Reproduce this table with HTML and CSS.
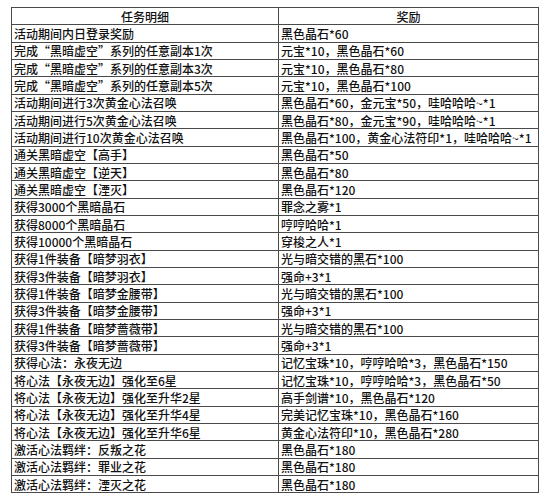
FILE: index.html
```html
<!DOCTYPE html>
<html lang="zh-CN">
<head>
<meta charset="utf-8">
<link rel="stylesheet" href="styles.css">
</head>
<body>
<div class="page">
<table class="tasks">
<colgroup><col class="c1"><col class="c2"></colgroup>
<thead>
<tr><th>任务明细</th><th>奖励</th></tr>
</thead>
<tbody>
<tr><td>活动期间内日登录奖励</td><td>黑色晶石*60</td></tr>
<tr><td>完成“黑暗虚空”系列的任意副本1次</td><td>元宝*10，黑色晶石*60</td></tr>
<tr><td>完成“黑暗虚空”系列的任意副本3次</td><td>元宝*10，黑色晶石*80</td></tr>
<tr><td>完成“黑暗虚空”系列的任意副本5次</td><td>元宝*10，黑色晶石*100</td></tr>
<tr><td>活动期间进行3次黄金心法召唤</td><td>黑色晶石*60，金元宝*50，哇哈哈哈~*1</td></tr>
<tr><td>活动期间进行5次黄金心法召唤</td><td>黑色晶石*80，金元宝*90，哇哈哈哈~*1</td></tr>
<tr><td>活动期间进行10次黄金心法召唤</td><td>黑色晶石*100，黄金心法符印*1，哇哈哈哈~*1</td></tr>
<tr><td>通关黑暗虚空【高手】</td><td>黑色晶石*50</td></tr>
<tr><td>通关黑暗虚空【逆天】</td><td>黑色晶石*80</td></tr>
<tr><td>通关黑暗虚空【湮灭】</td><td>黑色晶石*120</td></tr>
<tr><td>获得3000个黑暗晶石</td><td>罪念之雾*1</td></tr>
<tr><td>获得8000个黑暗晶石</td><td>哼哼哈哈*1</td></tr>
<tr><td>获得10000个黑暗晶石</td><td>穿梭之人*1</td></tr>
<tr><td>获得1件装备【暗梦羽衣】</td><td>光与暗交错的黑石*100</td></tr>
<tr><td>获得3件装备【暗梦羽衣】</td><td>强命+3*1</td></tr>
<tr><td>获得1件装备【暗梦金腰带】</td><td>光与暗交错的黑石*100</td></tr>
<tr><td>获得3件装备【暗梦金腰带】</td><td>强命+3*1</td></tr>
<tr><td>获得1件装备【暗梦蔷薇带】</td><td>光与暗交错的黑石*100</td></tr>
<tr><td>获得3件装备【暗梦蔷薇带】</td><td>强命+3*1</td></tr>
<tr><td>获得心法：永夜无边</td><td>记忆宝珠*10，哼哼哈哈*3，黑色晶石*150</td></tr>
<tr><td>将心法【永夜无边】强化至6星</td><td>记忆宝珠*10，哼哼哈哈*3，黑色晶石*50</td></tr>
<tr><td>将心法【永夜无边】强化至升华2星</td><td>高手剑谱*10，黑色晶石*120</td></tr>
<tr><td>将心法【永夜无边】强化至升华4星</td><td>完美记忆宝珠*10，黑色晶石*160</td></tr>
<tr><td>将心法【永夜无边】强化至升华6星</td><td>黄金心法符印*10，黑色晶石*280</td></tr>
<tr><td>激活心法羁绊：反叛之花</td><td>黑色晶石*180</td></tr>
<tr><td>激活心法羁绊：罪业之花</td><td>黑色晶石*180</td></tr>
<tr><td>激活心法羁绊：湮灭之花</td><td>黑色晶石*180</td></tr>
</tbody>
</table>
</div>
</body>
</html>
```
FILE: styles.css
```css
html, body {
  margin: 0;
  padding: 0;
  background: #ffffff;
}
.page {
  padding: 7px 0 0 11px;
  font-family: "Noto Sans CJK SC", "Noto Sans", sans-serif;
  font-size: 12px;
  font-weight: 500;
  color: #111111;
}
.tasks {
  border-collapse: collapse;
  table-layout: fixed;
  width: 527px;
}
.tasks .c1 { width: 267px; }
.tasks .c2 { width: 260px; }
.tasks tr {
  height: 17.33px;
}
.tasks th,
.tasks td {
  border: 1px solid #4a4a4a;
  padding: 0 2px;
  line-height: 15px;
  white-space: nowrap;
  overflow: hidden;
  vertical-align: middle;
}
.tasks th {
  font-weight: 500;
  text-align: center;
}
.tasks td {
  text-align: left;
}
```
